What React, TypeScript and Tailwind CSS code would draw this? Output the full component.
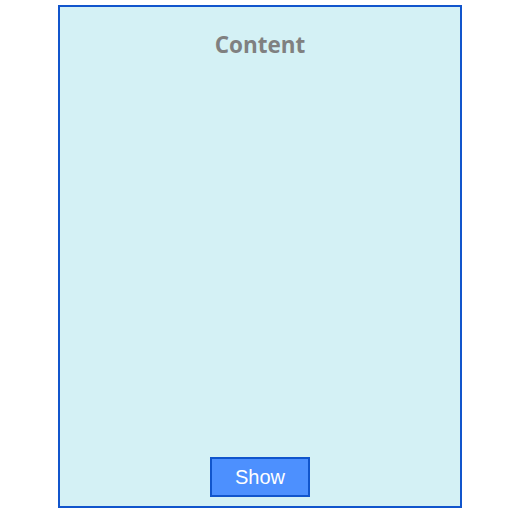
export default function App() {
  return (
    <div className="h-[526px] w-[507px] bg-white pt-[5px] pl-[58px]">
      <div className="flex h-[503px] w-[404px] flex-col items-center border-2 border-[#1155cc] bg-[#d4f1f5]">
        <h1 className="mt-[24px] font-['Open_Sans',sans-serif] text-[22.5px] font-bold leading-[28px] text-[#808080]">
          Content
        </h1>
        <div className="flex-1" />
        <button className="mb-[9px] h-[40px] w-[100px] border-2 border-[#1155cc] bg-[#4d90fe] font-['Liberation_Sans',sans-serif] text-[20px] text-white">
          Show
        </button>
      </div>
    </div>
  );
}
